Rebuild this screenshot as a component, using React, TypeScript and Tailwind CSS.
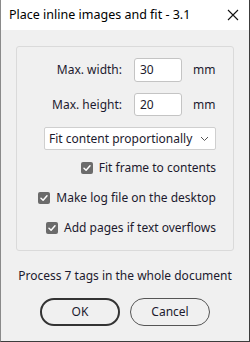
import React from 'react';

const font = { fontFamily: '"Noto Sans", "Open Sans", Arial, sans-serif' };

const Check: React.FC<{ label: string }> = ({ label }) => (
  <label className="flex items-center gap-[6px] h-[14px]">
    <span className="w-[12px] h-[12px] rounded-[2px] bg-[#6b6b6b] flex items-center justify-center">
      <svg width="10" height="10" viewBox="0 0 10 10" fill="none">
        <path d="M2 5.2 L4.1 7.2 L8 2.8" stroke="#fff" strokeWidth="1.5" strokeLinecap="round" strokeLinejoin="round" />
      </svg>
    </span>
    <span>{label}</span>
  </label>
);

const App: React.FC = () => {
  return (
    <div
      className="w-[250px] h-[342px] bg-[#f0f0f0] border-l border-r border-b border-l-[#8a8a8a] border-r-[#3c3c3c] border-b-[#3c3c3c] flex flex-col text-[12px] text-[#1c1a2e]"
      style={font}
    >
      <div className="h-[30px] bg-white flex items-center justify-between pl-[8px] pr-[8px] shrink-0">
        <span className="text-[12.5px] text-black">Place inline images and fit - 3.1</span>
        <svg width="14" height="14" viewBox="0 0 14 14" className="mr-[1px]">
          <path d="M2 2 L12 12 M12 2 L2 12" stroke="#111" strokeWidth="1.1" />
        </svg>
      </div>

      <div className="mx-[15px] mt-[16px] h-[205px] border border-[#dadada] rounded-[3px] pt-[11px]">
        <div className="flex flex-col gap-[11px]">
          <div className="flex items-center h-[24px]">
            <span className="w-[105px] text-right">Max. width:</span>
            <span className="ml-[12px] w-[48px] h-[24px] bg-white border border-[#c4c4c4] rounded-[3px] px-[5px] flex items-center">30</span>
            <span className="ml-[11px]">mm</span>
          </div>
          <div className="flex items-center h-[23px]">
            <span className="w-[105px] text-right">Max. height:</span>
            <span className="ml-[12px] w-[48px] h-[23px] bg-white border border-[#c4c4c4] rounded-[3px] px-[5px] flex items-center">20</span>
            <span className="ml-[11px]">mm</span>
          </div>
        </div>

        <div className="ml-[27px] mt-[11px] w-[172px] h-[23px] bg-white border border-[#cfcfcf] rounded-[2px] flex items-center justify-between pl-[4px] pr-[6px]">
          <span>Fit content proportionally</span>
          <svg width="9" height="6" viewBox="0 0 9 6" fill="none">
            <path d="M1 1 L4.5 4.5 L8 1" stroke="#555" strokeWidth="1" />
          </svg>
        </div>

        <div className="mt-[11px] pr-[17px] flex flex-col items-end gap-[16px]">
          <Check label="Fit frame to contents" />
          <Check label="Make log file on the desktop" />
          <Check label="Add pages if text overflows" />
        </div>
      </div>

      <div className="mt-[16px] text-center">Process 7 tags in the whole document</div>

      <div className="mt-[13px] flex justify-center gap-[10px]">
        <button className="w-[80px] h-[28px] rounded-full border-2 border-[#333] bg-transparent">OK</button>
        <button className="w-[80px] h-[28px] rounded-full border border-[#555] bg-transparent">Cancel</button>
      </div>
    </div>
  );
};

export default App;
